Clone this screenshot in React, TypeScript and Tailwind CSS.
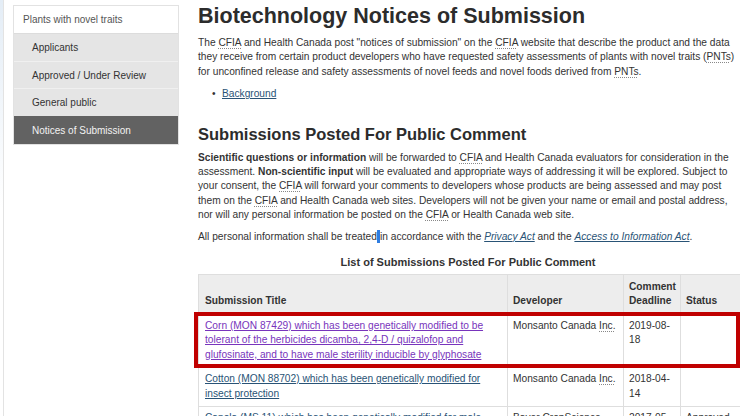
import React from "react";

const abbr = "underline decoration-dotted decoration-[#888] underline-offset-2";

export default function App() {
  return (
    <div
      className="w-[740px] h-[416px] overflow-hidden bg-white flex text-[#333]"
      style={{ fontFamily: '"Liberation Sans", Arial, sans-serif' }}
    >
      <div className="w-[3px] shrink-0 bg-gradient-to-b from-[#e4edf6] via-white to-white" />
      <div className="flex border-l border-[#e3e3e3] h-full">
        {/* Sidebar */}
        <div className="pl-[9px] pt-[5px] w-[194px] shrink-0">
          <div className="w-[166px] border border-[#e2e2e2] text-[10px]">
            <div className="h-[27px] flex items-center pl-[9px] bg-white text-[#555]">
              Plants with novel traits
            </div>
            <div className="h-[28px] flex items-center pl-[18px] bg-[#e5e5e5] border-t border-[#dcdcdc] text-[#333]">
              Applicants
            </div>
            <div className="h-[27px] flex items-center pl-[18px] bg-[#e5e5e5] border-t border-[#f0f0f0] text-[#333]">
              Approved / Under Review
            </div>
            <div className="h-[28px] flex items-center pl-[18px] bg-[#e5e5e5] border-t border-[#f0f0f0] text-[#333]">
              General public
            </div>
            <div className="h-[28px] flex items-center pl-[18px] bg-[#626262] text-[#f2f2f2]">
              Notices of Submission
            </div>
          </div>
        </div>

        {/* Main */}
        <div className="w-[540px] shrink-0 text-[10.2px] leading-[14.4px]">
          <h1 className="text-[21.5px] font-bold leading-[26px] mt-[3px] text-[#2c2c2c]">
            Biotechnology Notices of Submission
          </h1>
          <p className="mt-[7px]">
            The <span className={abbr}>CFIA</span> and Health Canada post "notices of submission" on the{" "}
            <span className={abbr}>CFIA</span> website that describe the product and the data they receive from
            certain product developers who have requested safety assessments of plants with novel traits (
            <span className={abbr}>PNTs</span>) for unconfined release and safety assessments of novel feeds and
            novel foods derived from <span className={abbr}>PNTs</span>.
          </p>
          <ul className="mt-[8px] pl-[14px]">
            <li className="flex">
              <span className="w-[10px]">•</span>
              <a className="underline text-[#295376]">Background</a>
            </li>
          </ul>
          <h2 className="text-[16.5px] font-bold leading-[20px] mt-[22px] text-[#2c2c2c]">
            Submissions Posted For Public Comment
          </h2>
          <p className="mt-[7px]">
            <b>Scientific questions or information</b> will be forwarded to <span className={abbr}>CFIA</span> and
            Health Canada evaluators for consideration in the assessment. <b>Non-scientific input</b> will be
            evaluated and appropriate ways of addressing it will be explored. Subject to your consent, the{" "}
            <span className={abbr}>CFIA</span> will forward your comments to developers whose products are being
            assessed and may post them on the <span className={abbr}>CFIA</span> and Health Canada web sites.
            Developers will not be given your name or email and postal address, nor will any personal information
            be posted on the <span className={abbr}>CFIA</span> or Health Canada web site.
          </p>
          <p className="mt-[7px]">
            All personal information shall be treated
            <span className="inline-block w-[3px] h-[13px] bg-[#2f7de1] align-[-3px]" />
            in accordance with the <a className="italic underline text-[#295376]">Privacy Act</a> and the{" "}
            <a className="italic underline text-[#295376]">Access to Information Act</a>.
          </p>

          <div className="text-center font-bold text-[11px] mt-[11px] leading-[14px] w-[540px]">
            List of Submissions Posted For Public Comment
          </div>

          <div className="relative mt-[5px] w-[560px]">
            <table className="w-[560px] border-collapse table-fixed">
              <colgroup>
                <col className="w-[309px]" />
                <col className="w-[116px]" />
                <col className="w-[57px]" />
                <col className="w-[78px]" />
              </colgroup>
              <thead>
                <tr className="bg-[#ededed]">
                  <th className="border border-[#dedede] px-[6px] py-[5px] text-left align-bottom font-bold">
                    Submission Title
                  </th>
                  <th className="border border-[#dedede] px-[5px] py-[5px] text-left align-bottom font-bold">
                    Developer
                  </th>
                  <th className="border border-[#dedede] px-[5px] py-[5px] text-left align-bottom font-bold">
                    Comment Deadline
                  </th>
                  <th className="border border-[#dedede] px-[5px] py-[5px] text-left align-bottom font-bold">
                    Status
                  </th>
                </tr>
              </thead>
              <tbody>
                <tr>
                  <td className="border border-[#dedede] px-[6px] pt-[4px] pb-[5px] align-top">
                    <a className="underline text-[#7834bc]">
                      Corn (MON 87429) which has been genetically modified to be tolerant of the herbicides dicamba,
                      2,4-D / quizalofop and glufosinate, and to have male sterility inducible by glyphosate
                    </a>
                  </td>
                  <td className="border border-[#dedede] px-[5px] pt-[4px] pb-[5px] align-top">
                    Monsanto Canada <span className={abbr}>Inc.</span>
                  </td>
                  <td className="border border-[#dedede] px-[5px] pt-[4px] pb-[5px] align-top">2019-08-18</td>
                  <td className="border border-[#dedede] px-[5px] pt-[4px] pb-[5px] align-top"></td>
                </tr>
                <tr>
                  <td className="border border-[#dedede] px-[6px] pt-[4px] pb-[5px] align-top">
                    <a className="underline text-[#295376]">
                      Cotton (MON 88702) which has been genetically modified for insect protection
                    </a>
                  </td>
                  <td className="border border-[#dedede] px-[5px] pt-[4px] pb-[5px] align-top">
                    Monsanto Canada <span className={abbr}>Inc.</span>
                  </td>
                  <td className="border border-[#dedede] px-[5px] pt-[4px] pb-[5px] align-top">2018-04-14</td>
                  <td className="border border-[#dedede] px-[5px] pt-[4px] pb-[5px] align-top"></td>
                </tr>
                <tr>
                  <td className="border border-[#dedede] px-[6px] pt-[4px] pb-[5px] align-top">
                    <a className="underline text-[#295376]">
                      Canola (MS 11) which has been genetically modified for male sterility
                    </a>
                  </td>
                  <td className="border border-[#dedede] px-[5px] pt-[4px] pb-[5px] align-top">Bayer CropScience Inc.</td>
                  <td className="border border-[#dedede] px-[5px] pt-[4px] pb-[5px] align-top">2017-05-01</td>
                  <td className="border border-[#dedede] px-[5px] pt-[4px] pb-[5px] align-top">Approved</td>
                </tr>
              </tbody>
            </table>
            {/* annotation highlight */}
            <div className="absolute left-[-4px] top-[38px] w-[546px] h-[56px] border-4 border-[#c00000] pointer-events-none" />
          </div>
        </div>
      </div>
    </div>
  );
}
